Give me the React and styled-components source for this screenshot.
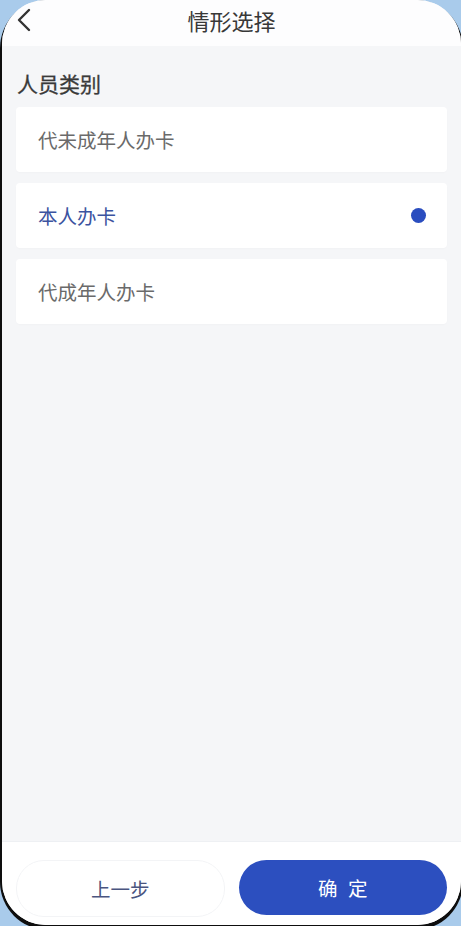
import styled, { createGlobalStyle } from 'styled-components';

const GlobalStyle = createGlobalStyle`
  html, body {
    margin: 0;
    padding: 0;
    background: #a9cbeb;
  }
  body {
    font-family: "Noto Sans CJK SC", "Noto Sans", sans-serif;
  }
`;

const options = [
  { id: 'minor', label: '代未成年人办卡' },
  { id: 'self', label: '本人办卡' },
  { id: 'adult', label: '代成年人办卡' },
];

export default function App() {
  const selected = 'self';
  return (
    <>
      <GlobalStyle />
      <Bezel>
        <Screen>
          <Header>
            <BackButton aria-label="back">
              <svg width="16" height="24" viewBox="0 0 16 24" fill="none">
                <path d="M13 2 L3 12 L13 22" stroke="#333" strokeWidth="2.4" strokeLinecap="round" strokeLinejoin="round" />
              </svg>
            </BackButton>
            <Title>情形选择</Title>
          </Header>
          <Body>
            <SectionTitle>人员类别</SectionTitle>
            <List>
              {options.map((o) => (
                <Option key={o.id} $active={o.id === selected}>
                  <span>{o.label}</span>
                  {o.id === selected && <Dot />}
                </Option>
              ))}
            </List>
          </Body>
          <Footer>
            <GhostButton>上一步</GhostButton>
            <PrimaryButton>确 定</PrimaryButton>
          </Footer>
        </Screen>
      </Bezel>
    </>
  );
}

const Bezel = styled.div`
  width: 463px;
  height: 930px;
  box-sizing: border-box;
  padding: 0 2px 5px 2px;
  background: #0e0e0e;
  border-radius: 48px;
`;

const Screen = styled.div`
  height: 100%;
  background: #f5f6f8;
  border-radius: 44px;
  overflow: hidden;
  display: flex;
  flex-direction: column;
`;

const Header = styled.div`
  height: 46px;
  flex-shrink: 0;
  background: #fdfdfe;
  display: flex;
  align-items: center;
  justify-content: center;
  position: relative;
`;

const BackButton = styled.div`
  position: absolute;
  left: 14px;
  top: 7px;
  width: 20px;
  height: 26px;
  display: flex;
  align-items: center;
`;

const Title = styled.div`
  font-size: 22px;
  color: #383838;
  margin-top: -7px;
`;

const Body = styled.div`
  flex: 1;
  padding: 22px 14px 0 14px;
`;

const SectionTitle = styled.div`
  font-size: 21px;
  color: #3a3a3a;
  padding-left: 1px;
  line-height: 30px;
  -webkit-text-stroke: 0.3px #3a3a3a;
`;

const List = styled.div`
  display: flex;
  flex-direction: column;
  gap: 11px;
  margin-top: 9px;
`;

const Option = styled.div`
  height: 65px;
  background: #fff;
  border-radius: 4px;
  display: flex;
  align-items: center;
  justify-content: space-between;
  padding: 0 21px 0 22px;
  font-size: 19.5px;
  color: ${(p) => (p.$active ? '#3b53a0' : '#6a6a6a')};
  box-shadow: 0 1px 2px rgba(0, 0, 0, 0.02);
`;

const Dot = styled.div`
  width: 15px;
  height: 15px;
  border-radius: 50%;
  background: #2a4dbf;
`;

const Footer = styled.div`
  height: 84px;
  flex-shrink: 0;
  background: #fff;
  display: grid;
  grid-template-columns: 1fr 1fr;
  gap: 14px;
  padding: 18px 14px 0 14px;
  box-sizing: border-box;
  border-top: 1px solid #eef0f3;
`;

const BaseButton = styled.div`
  height: 55px;
  border-radius: 28px;
  display: flex;
  align-items: center;
  justify-content: center;
  font-size: 19.5px;
`;

const GhostButton = styled(BaseButton)`
  border: 1px solid #f3f4f6;
  color: #4a5580;
`;

const PrimaryButton = styled(BaseButton)`
  background: #2c4fbf;
  color: #fff;
  white-space: pre;
  letter-spacing: 3px;
  padding-left: 3px;
`;
